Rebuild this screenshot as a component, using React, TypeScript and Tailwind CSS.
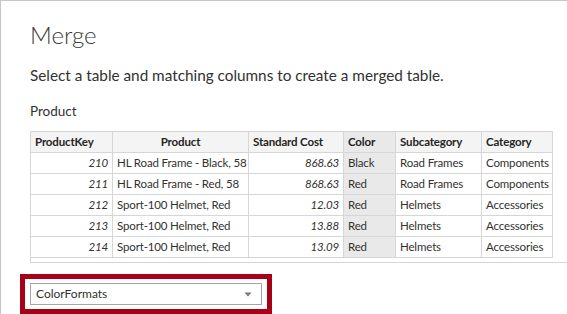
const columns = [
  { name: 'ProductKey', width: 'w-[82px]', align: 'text-left' },
  { name: 'Product', width: 'w-[136px]', align: 'text-center' },
  { name: 'Standard Cost', width: 'w-[95px]', align: 'text-left' },
  { name: 'Color', width: 'w-[52px]', align: 'text-left' },
  { name: 'Subcategory', width: 'w-[86px]', align: 'text-left' },
  { name: 'Category', width: 'w-[71px]', align: 'text-left' },
];

const rows = [
  { key: 210, product: 'HL Road Frame - Black, 58', cost: '868.63', color: 'Black', sub: 'Road Frames', cat: 'Components' },
  { key: 211, product: 'HL Road Frame - Red, 58', cost: '868.63', color: 'Red', sub: 'Road Frames', cat: 'Components' },
  { key: 212, product: 'Sport-100 Helmet, Red', cost: '12.03', color: 'Red', sub: 'Helmets', cat: 'Accessories' },
  { key: 213, product: 'Sport-100 Helmet, Red', cost: '13.88', color: 'Red', sub: 'Helmets', cat: 'Accessories' },
  { key: 214, product: 'Sport-100 Helmet, Red', cost: '13.09', color: 'Red', sub: 'Helmets', cat: 'Accessories' },
];

const cell = 'h-[21px] border border-[#d6d6d6] px-[4px] py-0 leading-[20px] whitespace-nowrap overflow-hidden';

export default function App() {
  return (
    <div
      className="w-[567px] h-[314px] overflow-hidden bg-white border-l border-t border-[#c6c6c6] text-[#323130]"
      style={{ fontFamily: 'Lato, "Open Sans", sans-serif' }}
    >
      <div className="pl-[29px] pt-[18px]">
        <h1 className="text-[24px] font-light leading-[32px] text-[#3b3a39]">Merge</h1>
        <p className="mt-[15px] text-[15.3px] leading-[18px]">
          Select a table and matching columns to create a merged table.
        </p>
        <p className="mt-[18px] text-[13.5px] leading-[18px]">Product</p>

        <div className="mt-[11px] h-[132px] border-l border-b border-[#d6d6d6]">
          <table className="w-[522px] border-collapse text-[11.5px] tracking-[-0.15px] table-fixed -ml-px">
            <thead>
              <tr>
                {columns.map((c) => (
                  <th
                    key={c.name}
                    className={`${cell} ${c.width} ${c.align} font-bold text-[#252423] ${
                      c.name === 'Color' ? 'bg-[#e9e9e9]' : 'bg-[#f4f4f4]'
                    }`}
                  >
                    {c.name}
                  </th>
                ))}
              </tr>
            </thead>
            <tbody>
              {rows.map((r) => (
                <tr key={r.key}>
                  <td className={`${cell} text-right italic`}>{r.key}</td>
                  <td className={`${cell} pr-0`}>{r.product}</td>
                  <td className={`${cell} text-right italic`}>{r.cost}</td>
                  <td className={`${cell} bg-[#e9e9e9]`}>{r.color}</td>
                  <td className={cell}>{r.sub}</td>
                  <td className={`${cell} pr-0`}>{r.cat}</td>
                </tr>
              ))}
            </tbody>
          </table>
        </div>
      </div>

      <div className="ml-[19px] mt-[11px] w-[252px] h-[40px] border-[5px] border-[#a80017] p-[4px] pl-[5px]">
        <div className="flex h-[22px] w-[232px] items-center justify-between border border-[#a6a6a6] pl-[5px] pr-[9px] text-[12px]">
          <span>ColorFormats</span>
          <svg width="8" height="5" viewBox="0 0 8 5">
            <path d="M0.5 0.5 H7.5 L4 4.5 Z" fill="#777" />
          </svg>
        </div>
      </div>
    </div>
  );
}
